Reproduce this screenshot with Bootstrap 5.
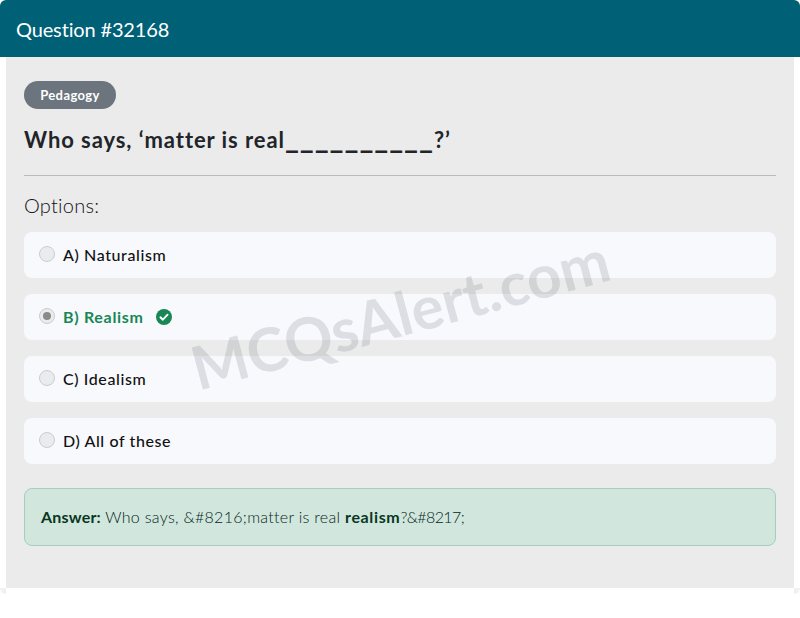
<!DOCTYPE html>
<html lang="en">
<head>
<meta charset="utf-8">
<title>Question #32168</title>
<link rel="stylesheet" href="https://cdn.jsdelivr.net/npm/bootstrap@5.3.0/dist/css/bootstrap.min.css">
<style>
html,body{background:#fff;font-family:"Lato","Noto Sans",sans-serif;overflow:hidden}
.q-shell{border-radius:6px;overflow:hidden;height:594px;background:linear-gradient(#f1f1f1,#f1f1f1) left bottom/6px 6px no-repeat,linear-gradient(#f1f1f1,#f1f1f1) right bottom/6px 6px no-repeat,#fff}
.q-head{background:#006076;color:#fff;height:57px;font-size:20px;padding:0 16px;letter-spacing:-.15px}
.q-inner{background:#ebebeb;margin:0 6px;height:531px;padding:24px 18px;position:relative}
.q-tag{background:#6c757d;color:#fff;height:28px;width:92px;font-size:13px;font-weight:700;border-radius:14px;letter-spacing:.4px;padding-top:2px}
.q-title{font-size:22px;font-weight:700;color:#212529;margin:17px 0 0;line-height:28px;letter-spacing:.93px}
.q-blank{letter-spacing:.9px;font-size:30px;line-height:20px}
.q-rule{border-top:1px solid #bbb;opacity:1;margin:21px 0 16px}
.q-opts{font-size:20px;font-weight:300;color:#111;margin:0 0 14px;line-height:26px;letter-spacing:.25px}
.q-list{gap:16px}
.q-opt{background:#f8f9fd;height:46px;border-radius:8px;padding:0 15px;font-size:16px;font-weight:500;color:#111;letter-spacing:.6px;gap:8px}
.q-radio{width:16px;height:16px;border-radius:50%;background:#e9ecef;border:1px solid #ccc;flex:none;display:flex;align-items:center;justify-content:center;margin-bottom:2px}
.q-dot{width:8px;height:8px;border-radius:50%;background:#8a8a8a}
.q-right{color:#198754;font-weight:700;letter-spacing:.7px}
.q-check{margin-left:4px;flex:none}
.q-ans{background:#d1e7dd;border:1px solid #a3cfbb;border-radius:8px;height:58px;margin:24px 0 0;padding:0 16px;font-size:16px;color:#04251a;font-weight:300;letter-spacing:.3px}
.q-ans strong{font-weight:700;letter-spacing:.2px;color:#0a3622}
.q-ans .q-word{letter-spacing:.65px}
.q-tail{letter-spacing:-.6px}
.q-mark{position:absolute;left:394px;top:256px;font-size:60px;font-weight:700;color:rgba(108,117,125,.2);transform:translate(-50%,-50%) rotate(-15deg);white-space:nowrap;line-height:1;pointer-events:none}
</style>
</head>
<body>
<div class="q-shell">
  <div class="q-head d-flex align-items-center">Question #32168</div>
  <div class="q-inner">
    <div class="q-tag d-flex align-items-center justify-content-center">Pedagogy</div>
    <h2 class="q-title">Who says, ‘matter is real<span class="q-blank">__________</span>?’</h2>
    <hr class="q-rule">
    <h3 class="q-opts">Options:</h3>
    <div class="d-flex flex-column q-list">
      <div class="q-opt d-flex align-items-center"><span class="q-radio"></span><span>A) Naturalism</span></div>
      <div class="q-opt q-right d-flex align-items-center"><span class="q-radio"><span class="q-dot"></span></span><span>B) Realism</span>
        <svg class="q-check" width="16" height="16" viewBox="0 0 16 16"><circle cx="8" cy="8" r="8" fill="#198754"/><path d="M4.4 8.3l2.5 2.4 4.7-5" fill="none" stroke="#fff" stroke-width="1.9" stroke-linecap="round" stroke-linejoin="round"/></svg></div>
      <div class="q-opt d-flex align-items-center"><span class="q-radio"></span><span>C) Idealism</span></div>
      <div class="q-opt d-flex align-items-center"><span class="q-radio"></span><span>D) All of these</span></div>
    </div>
    <div class="q-ans d-flex align-items-center"><span><strong>Answer:</strong> Who says, &amp;#8216;matter is real <strong class="q-word">realism</strong><span class="q-tail">?&amp;#8217;</span></span></div>
    <div class="q-mark">MCQsAlert.com</div>
  </div>
</div>
<script src="https://cdn.jsdelivr.net/npm/bootstrap@5.3.0/dist/js/bootstrap.bundle.min.js"></script>
</body>
</html>
